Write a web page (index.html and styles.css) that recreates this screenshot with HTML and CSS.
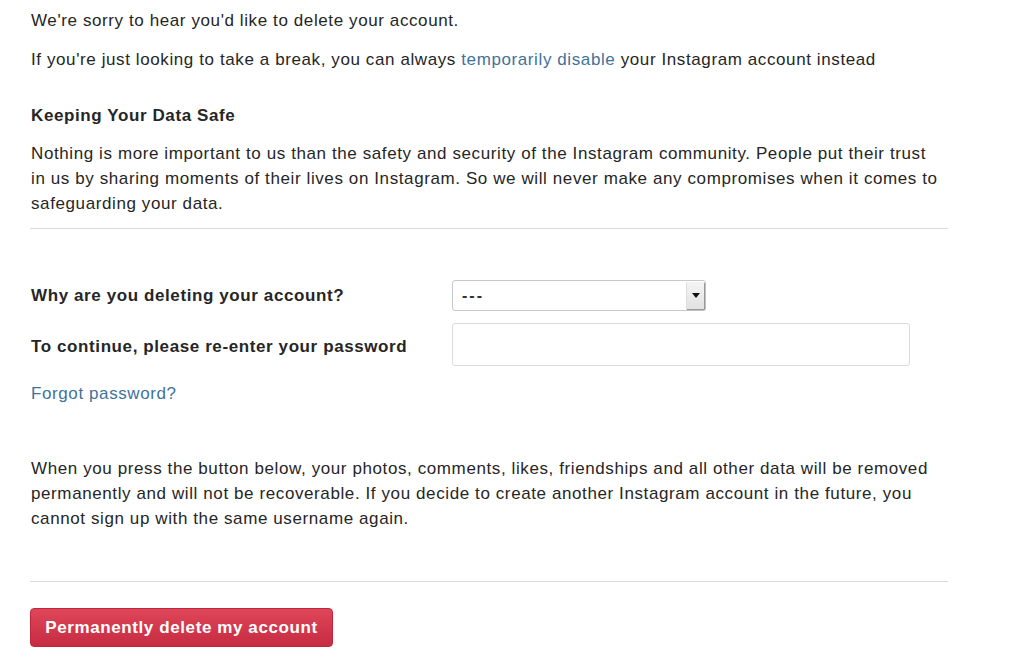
FILE: index.html
```html
<!DOCTYPE html>
<html>
<head>
<meta charset="utf-8">
<link rel="stylesheet" href="styles.css">
</head>
<body>
<main class="page">
  <p class="intro">We're sorry to hear you'd like to delete your account.</p>
  <p class="intro second">If you're just looking to take a break, you can always <a class="link" href="#">temporarily disable</a> your Instagram account instead</p>

  <h3 class="heading">Keeping Your Data Safe</h3>
  <p class="para">Nothing is more important to us than the safety and security of the Instagram community. People put their trust in us by sharing moments of their lives on Instagram. So we will never make any compromises when it comes to safeguarding your data.</p>

  <hr class="rule first-rule">

  <div class="form">
    <div class="row row-select">
      <label class="label">Why are you deleting your account?</label>
      <div class="select">
        <span class="select-value">---</span>
        <span class="select-arrow"><span class="caret"></span></span>
      </div>
    </div>
    <div class="row row-input">
      <label class="label">To continue, please re-enter your password</label>
      <div class="input"></div>
    </div>
    <a class="link forgot" href="#">Forgot password?</a>
  </div>

  <p class="para warning">When you press the button below, your photos, comments, likes, friendships and all other data will be removed permanently and will not be recoverable. If you decide to create another Instagram account in the future, you cannot sign up with the same username again.</p>

  <hr class="rule second-rule">

  <button class="delete-btn">Permanently delete my account</button>
</main>
</body>
</html>
```

FILE: styles.css
```css
html, body {
  margin: 0;
  padding: 0;
  background: #fff;
}
body {
  font-family: "Liberation Sans", Arial, sans-serif;
  font-size: 17px;
  letter-spacing: 0.6px;
  line-height: 25px;
  color: #262626;
}
.page {
  width: 918px;
  padding: 8px 0 0 31px;
}
p { margin: 0; }
.para { max-width: 910px; }
.intro.second { margin-top: 14px; }
.link {
  color: #3f729b;
  text-decoration: none;
}
.heading {
  margin: 31px 0 0;
  font-size: 17px;
  line-height: 25px;
  font-weight: bold;
}
.heading + .para { margin-top: 13px; }
.rule {
  border: 0;
  border-top: 1px solid #dbdbdb;
  margin: 0;
  width: 918px;
  margin-left: -1px;
}
.first-rule { margin-top: 12px; }
.form {
  padding-top: 51px;
  display: flex;
  flex-direction: column;
}
.row {
  display: flex;
  align-items: center;
}
.label {
  width: 421px;
  font-weight: bold;
}
.row-input .label { padding-top: 4px; }
.select {
  width: 252px;
  height: 29px;
  border: 1px solid #c8c8c8;
  border-radius: 3px;
  display: flex;
  align-items: center;
  justify-content: space-between;
  background: #fff;
  box-sizing: content-box;
}
.select-value {
  font-size: 16px;
  padding-left: 9px;
  color: #333;
  letter-spacing: 2px;
  font-weight: bold;
}
.select-arrow {
  width: 17px;
  height: 27px;
  margin-right: 1px;
  background: linear-gradient(#f4f4f4, #e2e2e2);
  border-left: 1px solid #ddd;
  box-shadow: 1px 1px 1px #999;
  display: flex;
  align-items: center;
  justify-content: center;
}
.caret {
  width: 0;
  height: 0;
  border-left: 4px solid transparent;
  border-right: 4px solid transparent;
  border-top: 5px solid #111;
}
.row-input { margin-top: 12px; }
.input {
  width: 456px;
  height: 41px;
  border: 1px solid #dbdbdb;
  border-radius: 3px;
  background: #fff;
}
.forgot {
  margin-top: 15px;
  align-self: flex-start;
}
.warning { margin-top: 50px; }
.second-rule { margin-top: 50px; }
.delete-btn {
  margin-top: 26px;
  margin-left: -1px;
  width: 303px;
  height: 39px;
  border: 1px solid #c1263c;
  border-radius: 4px;
  background: linear-gradient(#e04659, #c62c42);
  color: #fff;
  font-family: "Liberation Sans", Arial, sans-serif;
  font-weight: bold;
  font-size: 17px;
  letter-spacing: 0.6px;
  cursor: pointer;
}
```
